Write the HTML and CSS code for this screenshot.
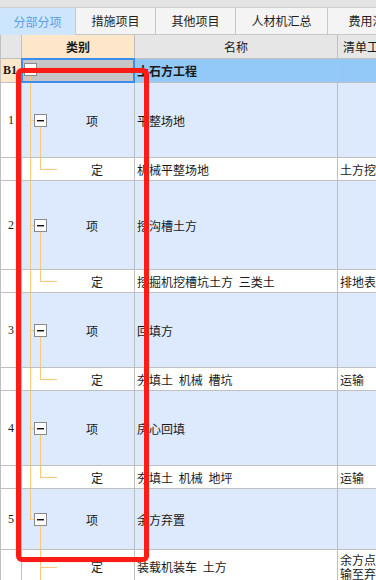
FILE: index.html
```html
<!DOCTYPE html>
<html lang="zh">
<head>
<meta charset="utf-8">
<title>分部分项</title>
<link rel="stylesheet" href="styles.css">
</head>
<body>
<div class="tabs">
  <div class="tab active w1">分部分项</div>
  <div class="tab w2">措施项目</div>
  <div class="tab w2">其他项目</div>
  <div class="tab w4">人材机汇总</div>
  <div class="tab w5">费用汇总</div>
</div>
<div class="sheet">
  <div class="row head">
    <div class="c num"></div>
    <div class="c cat hcat">类别</div>
    <div class="c name hname">名称</div>
    <div class="c list">清单工作内容</div>
  </div>
  <div class="row b1 h24">
    <div class="c num bnum">B1</div>
    <div class="c cat bcat"><span class="box bbox"></span><span class="vb1"></span></div>
    <div class="c name bname">土石方工程</div>
    <div class="c list blist"></div>
  </div>

  <div class="row xiang h75">
    <div class="c num">1</div>
    <div class="c cat"><span class="vmain"></span><span class="hconn"></span><span class="box"></span><span class="vsubdown"></span><span class="t tx">项</span></div>
    <div class="c name">平整场地</div>
    <div class="c list"></div>
  </div>
  <div class="row ding h23">
    <div class="c num"></div>
    <div class="c cat"><span class="vmain"></span><span class="vsubup"></span><span class="hsub"></span><span class="t td">定</span></div>
    <div class="c name">机械平整场地</div>
    <div class="c list">土方挖填、场地找平、运输</div>
  </div>

  <div class="row xiang h89">
    <div class="c num">2</div>
    <div class="c cat"><span class="vmain"></span><span class="hconn"></span><span class="box"></span><span class="vsubdown"></span><span class="t tx">项</span></div>
    <div class="c name">挖沟槽土方</div>
    <div class="c list"></div>
  </div>
  <div class="row ding h23">
    <div class="c num"></div>
    <div class="c cat"><span class="vmain"></span><span class="vsubup"></span><span class="hsub"></span><span class="t td">定</span></div>
    <div class="c name">挖掘机挖槽坑土方 三类土</div>
    <div class="c list">排地表水、土方开挖</div>
  </div>

  <div class="row xiang h75">
    <div class="c num">3</div>
    <div class="c cat"><span class="vmain"></span><span class="hconn"></span><span class="box"></span><span class="vsubdown"></span><span class="t tx">项</span></div>
    <div class="c name">回填方</div>
    <div class="c list"></div>
  </div>
  <div class="row ding h23">
    <div class="c num"></div>
    <div class="c cat"><span class="vmain"></span><span class="vsubup"></span><span class="hsub"></span><span class="t td">定</span></div>
    <div class="c name">夯填土 机械 槽坑</div>
    <div class="c list">运输</div>
  </div>

  <div class="row xiang h75">
    <div class="c num">4</div>
    <div class="c cat"><span class="vmain"></span><span class="hconn"></span><span class="box"></span><span class="vsubdown"></span><span class="t tx">项</span></div>
    <div class="c name">房心回填</div>
    <div class="c list"></div>
  </div>
  <div class="row ding h23">
    <div class="c num"></div>
    <div class="c cat"><span class="vmain"></span><span class="vsubup"></span><span class="hsub"></span><span class="t td">定</span></div>
    <div class="c name">夯填土 机械 地坪</div>
    <div class="c list">运输</div>
  </div>

  <div class="row xiang h61">
    <div class="c num">5</div>
    <div class="c cat"><span class="vmainhalf"></span><span class="hconn"></span><span class="box"></span><span class="vsubdown"></span><span class="t tx">项</span></div>
    <div class="c name">余方弃置</div>
    <div class="c list"></div>
  </div>
  <div class="row ding h34">
    <div class="c num"></div>
    <div class="c cat"><span class="vsubfull"></span><span class="hsub"></span><span class="t td">定</span></div>
    <div class="c name">装载机装车 土方</div>
    <div class="c list wrap"><span class="ln">余方点装料运</span><span class="ln">输至弃置点</span></div>
  </div>
</div>
<div class="mark"></div>
</body>
</html>
```

FILE: styles.css
```css
* { box-sizing: border-box; }
html, body { margin: 0; padding: 0; }
body {
  width: 376px;
  height: 580px;
  overflow: hidden;
  position: relative;
  background: #ffffff;
  font-family: "Noto Sans CJK SC", "Noto Sans", sans-serif;
  font-size: 12px;
  color: #1a1a1a;
}

/* tabs */
.tabs {
  display: flex;
  height: 35px;
  padding-top: 7px;
  background: #e3e3e3;
  overflow: hidden;
  white-space: nowrap;
}
.tab {
  flex-shrink: 0;
  height: 28px;
  line-height: 26px;
  text-align: center;
  background: #f4f4f4;
  border-top: 1px solid #cfcfcf;
  border-right: 1px solid #c8c8c8;
  border-bottom: 1px solid #c8c8c8;
  color: #1e1e1e;
  font-size: 12px;
}
.tab.active {
  background: #cde6fd;
  color: #5a9fe6;
  border-bottom: none;
  line-height: 27px;
}
.w1 { width: 76px; }
.w2 { width: 80px; }
.w4 { width: 92px; }
.w5 { width: 90px; }

/* sheet */
.sheet { width: 376px; overflow: hidden; }
.row {
  display: grid;
  grid-template-columns: 22px 113px 203px 80px;
  white-space: nowrap;
}
.c {
  border-right: 1px solid #c0c0c0;
  border-bottom: 1px solid #c0c0c0;
  overflow: hidden;
  display: flex;
  align-items: center;
  position: relative;
}
.num {
  border-left: 1px solid #c0c0c0;
  justify-content: center;
  font-family: "Liberation Serif", "DejaVu Serif", serif;
  font-size: 12px;
  background: #ffffff;
}
.name { padding-left: 2px; word-spacing: 3px; }
.list { padding-left: 2px; }

.head { height: 24px; }
.head .c { background: #e6e6e6; }
.head .hcat { background: #fde7ca; justify-content: center; font-weight: bold; }
.head .hname { justify-content: center; padding-left: 0; }
.head .list { padding-left: 5px; }

.h23 { height: 23px; }
.h24 { height: 24px; }
.h34 { height: 34px; }
.h61 { height: 61px; }
.h75 { height: 75px; }
.h89 { height: 89px; }

.b1 .bnum { background: #fde7ca; font-weight: bold; font-size: 12px; justify-content: flex-start; padding-left: 2px; }
.b1 .bcat { background: #c6c6c6; overflow: visible; z-index: 2; }
.b1 .bcat::after {
  content: "";
  position: absolute;
  left: -1px; top: -1px; right: -1px; bottom: -1px;
  border: 2px solid #3b8ef0;
}
.b1 .bname { background: #93c9f8; font-weight: bold; }
.b1 .blist { background: #93c9f8; }

.xiang .cat, .xiang .name, .xiang .list { background: #dde9fd; }
.ding .c { background: #ffffff; }

/* tree */
.box {
  position: absolute;
  left: 12px;
  top: calc(50% - 6px);
  width: 13px;
  height: 13px;
  border: 1px solid #8a8a8a;
  background: #ffffff;
  z-index: 1;
}
.box::after {
  content: "";
  position: absolute;
  left: 2px; right: 2px;
  top: 5px;
  height: 1px;
  background: #111;
  box-shadow: 0 0.6px 0 #555;
}
.bbox { left: 2px; top: 4px; }
.vb1 { position: absolute; left: 8px; top: 17px; bottom: -1px; width: 1px; background: #ffc77a; }
.vmain { position: absolute; left: 8px; top: 0; bottom: -1px; width: 1px; background: #ffc77a; }
.vmainhalf { position: absolute; left: 8px; top: 0; height: 50%; width: 1px; background: #ffc77a; }
.hconn { position: absolute; left: 8px; top: 50%; width: 5px; height: 1px; background: #ffc77a; }
.vsubdown { position: absolute; left: 18px; top: calc(50% + 6px); bottom: -1px; width: 1px; background: #ffc77a; }
.vsubup { position: absolute; left: 18px; top: 0; height: 50%; width: 1px; background: #ffc77a; }
.vsubfull { position: absolute; left: 18px; top: 0; bottom: -1px; width: 1px; background: #ffc77a; }
.hsub { position: absolute; left: 18px; top: 50%; width: 17px; height: 1px; background: #ffc77a; }
.t { position: relative; }
.tx { margin-left: 64px; }
.td { margin-left: 69px; }

.wrap {
  flex-direction: column;
  align-items: flex-start;
  justify-content: center;
}
.ln { display: block; line-height: 14px; height: 14px; }

/* annotation rectangle */
.mark {
  position: absolute;
  left: 16px;
  top: 68px;
  width: 133px;
  height: 494px;
  border: 5px solid #fb1c15;
  border-radius: 6px;
  z-index: 5;
  box-shadow: 0 0 1px rgba(251, 28, 21, 0.6);
}
```
